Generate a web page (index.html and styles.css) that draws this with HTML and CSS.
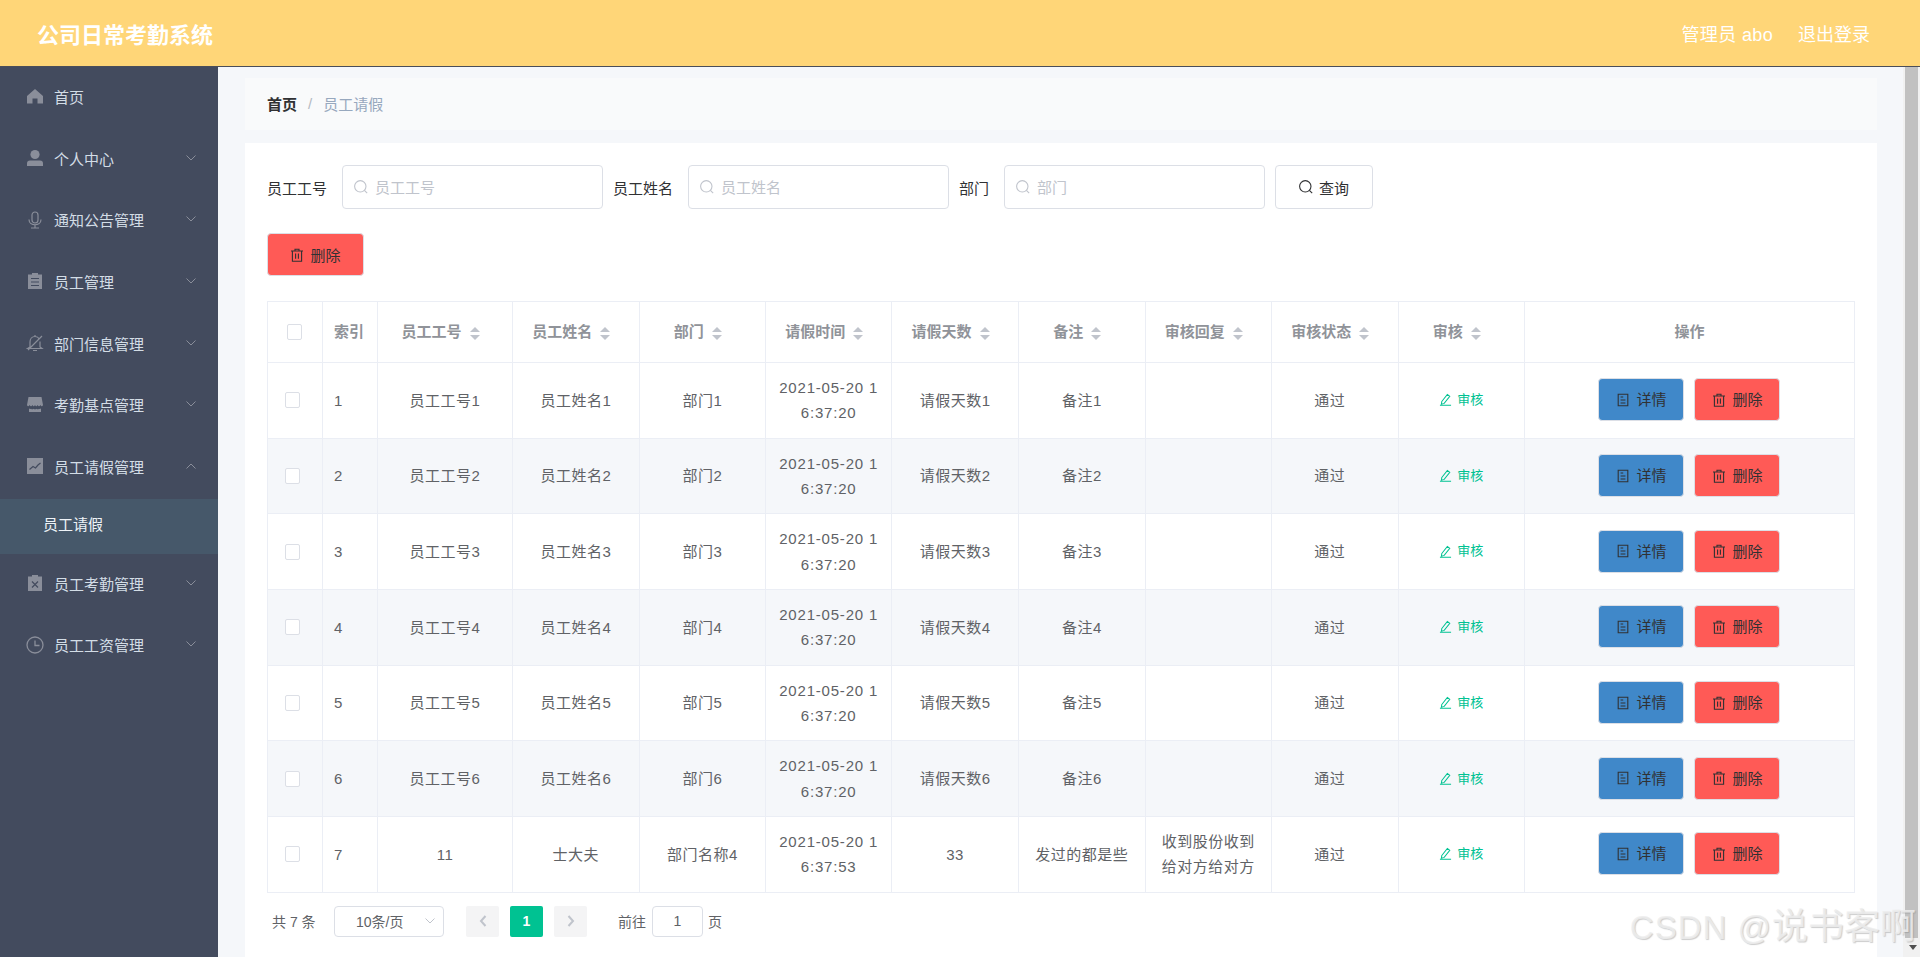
FILE: index.html
```html
<!DOCTYPE html>
<html lang="zh-CN">
<head>
<meta charset="utf-8">
<title>公司日常考勤系统</title>
<link rel="stylesheet" href="styles.css">
</head>
<body>
<svg class="sprite" width="0" height="0" aria-hidden="true">
  <symbol id="i-search" viewBox="0 0 14 14"><circle cx="6.300" cy="6.300" r="5.700" fill="none" stroke="currentColor" stroke-width="1.100"/><path d="M10.400 10.400l2.800 2.800" fill="none" stroke="currentColor" stroke-width="1.100"/></symbol>
  <symbol id="i-trash" viewBox="0 0 14 14"><path d="M1 3h12M5 3V1.200h4V3M2.400 3v10.200h9.200V3M5.600 5.400v5.400M8.400 5.400v5.400" fill="none" stroke="currentColor" stroke-width="1.100"/></symbol>
  <symbol id="i-doc" viewBox="0 0 14 14"><path d="M2.200 1.200h9.600v11.600H2.200zM4.600 4h2.600M4.600 7h4.800M4.600 10h4.800" fill="none" stroke="currentColor" stroke-width="1.100"/></symbol>
  <symbol id="i-edit" viewBox="0 0 14 14"><path d="M3 9.200L9 1.500l2.600 2-6 7.700-3 .8zM1 13.300h12" fill="none" stroke="currentColor" stroke-width="1.100"/></symbol>
  <symbol id="i-down" viewBox="0 0 10 6"><path d="M.5.5L5 5 9.500.5" fill="none" stroke="currentColor" stroke-width="1"/></symbol>
  <symbol id="i-up" viewBox="0 0 10 6"><path d="M.5 5.500L5 1l4.500 4.500" fill="none" stroke="currentColor" stroke-width="1"/></symbol>
</svg>

<header class="topbar">
  <div class="brand">公司日常考勤系统</div>
  <div class="userbox"><span class="who">管理员 abo</span><span>退出登录</span></div>
</header>

<div class="shell">
  <nav class="side">
    <a class="nav-item"><svg class="nav-icon" viewBox="0 0 18 18"><path d="M9 2L1 9v7.600h5.500v-5h5v5H17V9z" fill="currentColor"/></svg><span>首页</span></a>
    <a class="nav-item"><svg class="nav-icon" viewBox="0 0 18 18"><circle cx="9" cy="5.500" r="4.600" fill="currentColor"/><path d="M1 17v-2.500Q1 11.500 4 11.500h10q3 0 3 3V17z" fill="currentColor"/></svg><span>个人中心</span><svg class="chev"><use href="#i-down"/></svg></a>
    <a class="nav-item"><svg class="nav-icon" viewBox="0 0 18 18"><rect x="6" y="1" width="6" height="11" rx="3" fill="none" stroke="currentColor" stroke-width="1.200"/><path d="M3 8.500c0 7 12 7 12 0M9 14v3M5 17h8" fill="none" stroke="currentColor" stroke-width="1.200"/></svg><span>通知公告管理</span><svg class="chev"><use href="#i-down"/></svg></a>
    <a class="nav-item"><svg class="nav-icon" viewBox="0 0 18 18"><path d="M2 2.500h4V1h6v1.500h4V17H2z" fill="currentColor"/><path d="M5 6.500h8M5 10h8M5 13.500h8" stroke="#434b5e" stroke-width="1.200"/></svg><span>员工管理</span><svg class="chev"><use href="#i-down"/></svg></a>
    <a class="nav-item"><svg class="nav-icon" viewBox="0 0 18 18"><path d="M4 13V8c0-3 2-5.500 5-5.500 2 0 3.500 1 4.300 2.500M14 7.500V13l2 1.500H1.500L4 13M7 16.500h4M9 2.500V1M2 16L16 2" fill="none" stroke="currentColor" stroke-width="1.200"/></svg><span>部门信息管理</span><svg class="chev"><use href="#i-down"/></svg></a>
    <a class="nav-item"><svg class="nav-icon" viewBox="0 0 18 18"><path d="M2.500 1h13L17 9q-1 2.500-2.700 0-1.300 2.500-2.700 0-1.300 2.500-2.600 0-1.300 2.500-2.600 0-1.400 2.500-2.700 0Q2 11.500 1 9z" fill="currentColor"/><path d="M3 12.500q1 .8 2 .3 1.300 1 2.500 0 1.500 1 3 0 1.300 1 2.500 0 1 .5 2-.3V16H3z" fill="currentColor"/></svg><span>考勤基点管理</span><svg class="chev"><use href="#i-down"/></svg></a>
    <a class="nav-item"><svg class="nav-icon" viewBox="0 0 18 18"><rect x="1" y="1" width="16" height="16" fill="currentColor"/><path d="M3.500 12.500L7 9.500l2.500 1.500 2.500-3 2.500-2" fill="none" stroke="#434b5e" stroke-width="1.200"/></svg><span>员工请假管理</span><svg class="chev"><use href="#i-up"/></svg></a>
    <a class="nav-sub">员工请假</a>
    <a class="nav-item"><svg class="nav-icon" viewBox="0 0 18 18"><path d="M2 2.500h4V1h6v1.500h4V17H2z" fill="currentColor"/><path d="M6 7.500l6 6M12 7.500l-6 6" stroke="#434b5e" stroke-width="1.200"/></svg><span>员工考勤管理</span><svg class="chev"><use href="#i-down"/></svg></a>
    <a class="nav-item"><svg class="nav-icon" viewBox="0 0 18 18"><circle cx="9" cy="9" r="8" fill="none" stroke="currentColor" stroke-width="1.300"/><path d="M9 4.500V9.500h4.500" fill="none" stroke="currentColor" stroke-width="1.300"/></svg><span>员工工资管理</span><svg class="chev"><use href="#i-down"/></svg></a>
  </nav>

  <main class="main">
    <div class="crumbs"><b>首页</b><span class="crumb-sep">/</span><span class="crumb-cur">员工请假</span></div>
    <section class="card">
      <form class="filters">
        <label class="f-label">员工工号</label>
        <div class="f-input"><svg class="ic"><use href="#i-search"/></svg><input placeholder="员工工号"></div>
        <label class="f-label">员工姓名</label>
        <div class="f-input"><svg class="ic"><use href="#i-search"/></svg><input placeholder="员工姓名"></div>
        <label class="f-label">部门</label>
        <div class="f-input"><svg class="ic"><use href="#i-search"/></svg><input placeholder="部门"></div>
        <button type="button" class="btn btn-query"><svg class="ic"><use href="#i-search"/></svg>查询</button>
      </form>
      <div class="bulk"><button type="button" class="btn btn-red btn-bulk"><svg class="ic"><use href="#i-trash"/></svg>删除</button></div>

      <table class="grid">
        <colgroup><col class="w55"><col class="w55"><col class="w135"><col class="w127"><col class="w126"><col class="w126"><col class="w127"><col class="w127"><col class="w126"><col class="w127"><col class="w126"><col></colgroup>
        <thead>
          <tr>
            <th><span class="chk chk-head"></span></th>
            <th class="left">索引</th>
            <th class="sortable">员工工号<span class="sort"><i></i><i></i></span></th>
            <th class="sortable">员工姓名<span class="sort"><i></i><i></i></span></th>
            <th class="sortable">部门<span class="sort"><i></i><i></i></span></th>
            <th class="sortable">请假时间<span class="sort"><i></i><i></i></span></th>
            <th class="sortable">请假天数<span class="sort"><i></i><i></i></span></th>
            <th class="sortable">备注<span class="sort"><i></i><i></i></span></th>
            <th class="sortable">审核回复<span class="sort"><i></i><i></i></span></th>
            <th class="sortable">审核状态<span class="sort"><i></i><i></i></span></th>
            <th class="sortable">审核<span class="sort"><i></i><i></i></span></th>
            <th>操作</th>
          </tr>
        </thead>
        <tbody>
          <tr>
            <td><span class="chk"></span></td><td class="left">1</td><td>员工工号1</td><td>员工姓名1</td><td>部门1</td><td class="date">2021-05-20 16:37:20</td><td>请假天数1</td><td>备注1</td><td></td><td class="status">通过</td>
            <td><a class="audit"><svg class="ic"><use href="#i-edit"/></svg>审核</a></td>
            <td><div class="ops"><button type="button" class="btn btn-blue"><svg class="ic"><use href="#i-doc"/></svg>详情</button><button type="button" class="btn btn-red"><svg class="ic"><use href="#i-trash"/></svg>删除</button></div></td>
          </tr>
          <tr>
            <td><span class="chk"></span></td><td class="left">2</td><td>员工工号2</td><td>员工姓名2</td><td>部门2</td><td class="date">2021-05-20 16:37:20</td><td>请假天数2</td><td>备注2</td><td></td><td class="status">通过</td>
            <td><a class="audit"><svg class="ic"><use href="#i-edit"/></svg>审核</a></td>
            <td><div class="ops"><button type="button" class="btn btn-blue"><svg class="ic"><use href="#i-doc"/></svg>详情</button><button type="button" class="btn btn-red"><svg class="ic"><use href="#i-trash"/></svg>删除</button></div></td>
          </tr>
          <tr>
            <td><span class="chk"></span></td><td class="left">3</td><td>员工工号3</td><td>员工姓名3</td><td>部门3</td><td class="date">2021-05-20 16:37:20</td><td>请假天数3</td><td>备注3</td><td></td><td class="status">通过</td>
            <td><a class="audit"><svg class="ic"><use href="#i-edit"/></svg>审核</a></td>
            <td><div class="ops"><button type="button" class="btn btn-blue"><svg class="ic"><use href="#i-doc"/></svg>详情</button><button type="button" class="btn btn-red"><svg class="ic"><use href="#i-trash"/></svg>删除</button></div></td>
          </tr>
          <tr>
            <td><span class="chk"></span></td><td class="left">4</td><td>员工工号4</td><td>员工姓名4</td><td>部门4</td><td class="date">2021-05-20 16:37:20</td><td>请假天数4</td><td>备注4</td><td></td><td class="status">通过</td>
            <td><a class="audit"><svg class="ic"><use href="#i-edit"/></svg>审核</a></td>
            <td><div class="ops"><button type="button" class="btn btn-blue"><svg class="ic"><use href="#i-doc"/></svg>详情</button><button type="button" class="btn btn-red"><svg class="ic"><use href="#i-trash"/></svg>删除</button></div></td>
          </tr>
          <tr>
            <td><span class="chk"></span></td><td class="left">5</td><td>员工工号5</td><td>员工姓名5</td><td>部门5</td><td class="date">2021-05-20 16:37:20</td><td>请假天数5</td><td>备注5</td><td></td><td class="status">通过</td>
            <td><a class="audit"><svg class="ic"><use href="#i-edit"/></svg>审核</a></td>
            <td><div class="ops"><button type="button" class="btn btn-blue"><svg class="ic"><use href="#i-doc"/></svg>详情</button><button type="button" class="btn btn-red"><svg class="ic"><use href="#i-trash"/></svg>删除</button></div></td>
          </tr>
          <tr>
            <td><span class="chk"></span></td><td class="left">6</td><td>员工工号6</td><td>员工姓名6</td><td>部门6</td><td class="date">2021-05-20 16:37:20</td><td>请假天数6</td><td>备注6</td><td></td><td class="status">通过</td>
            <td><a class="audit"><svg class="ic"><use href="#i-edit"/></svg>审核</a></td>
            <td><div class="ops"><button type="button" class="btn btn-blue"><svg class="ic"><use href="#i-doc"/></svg>详情</button><button type="button" class="btn btn-red"><svg class="ic"><use href="#i-trash"/></svg>删除</button></div></td>
          </tr>
          <tr>
            <td><span class="chk"></span></td><td class="left">7</td><td>11</td><td>士大夫</td><td>部门名称4</td><td class="date">2021-05-20 16:37:53</td><td>33</td><td>发过的都是些</td><td>收到股份收到给对方给对方</td><td class="status">通过</td>
            <td><a class="audit"><svg class="ic"><use href="#i-edit"/></svg>审核</a></td>
            <td><div class="ops"><button type="button" class="btn btn-blue"><svg class="ic"><use href="#i-doc"/></svg>详情</button><button type="button" class="btn btn-red"><svg class="ic"><use href="#i-trash"/></svg>删除</button></div></td>
          </tr>
        </tbody>
      </table>

      <div class="pager">
        <span class="pg-total">共 7 条</span>
        <div class="pg-size"><span>10条/页</span><svg class="pg-chev"><use href="#i-down"/></svg></div>
        <div class="pg-nums">
          <span class="pg-btn"><svg class="pg-arrow" viewBox="0 0 10 14"><path d="M7.500 2L3 7l4.500 5" fill="none" stroke="currentColor" stroke-width="2"/></svg></span>
          <span class="pg-btn pg-on">1</span>
          <span class="pg-btn"><svg class="pg-arrow" viewBox="0 0 10 14"><path d="M2.500 2L7 7l-4.500 5" fill="none" stroke="currentColor" stroke-width="2"/></svg></span>
        </div>
        <span class="pg-goto">前往</span>
        <span class="pg-input">1</span>
        <span class="pg-unit">页</span>
      </div>
    </section>
  </main>

  <div class="scrollbar"><div class="thumb"></div><div class="scroll-end"><i></i></div></div>
</div>

<div class="watermark"><span class="wm-latin">CSDN @</span>说书客啊</div>
</body>
</html>
```

FILE: styles.css
```css
* { box-sizing: border-box; }
html, body { margin: 0; height: 957px; overflow: hidden; }
body {
  position: relative;
  display: flex;
  flex-direction: column;
  font-family: "Liberation Sans", "Noto Sans CJK SC", sans-serif;
  font-size: 15px;
  color: #606266;
  background: #f5f7fa;
}
.sprite { position: absolute; }

.topbar {
  flex: none;
  height: 67px;
  display: flex;
  align-items: center;
  justify-content: space-between;
  padding: 0 50px 0 37px;
  background: #ffd678;
  border-bottom: 1px solid #4a4e59;
  color: #fff;
}
.brand { font-size: 22px; font-weight: 700; }
.userbox { display: flex; gap: 25px; font-size: 18px; }
.who { letter-spacing: .35px; }

.shell { flex: 1; display: flex; min-height: 0; }

.side { flex: none; width: 218px; background: #434b5e; }
.nav-item {
  height: 61.7px;
  display: flex;
  align-items: center;
  padding: 0 22px 3px 26px;
  color: #d3dde6;
}
.nav-icon { flex: none; width: 18px; height: 18px; margin-right: 10px; color: #8a8e9a; }
.chev { flex: none; width: 10px; height: 6px; margin: -1px 0 0 auto; color: #8a8e9a; }
.nav-sub {
  display: flex;
  align-items: center;
  height: 55px;
  padding: 0 0 5px 43px;
  background: #46586a;
  color: #eef3f7;
}

.main { flex: 1; min-width: 0; padding: 11px 26px 0 27px; }
.crumbs {
  height: 52px;
  display: flex;
  align-items: center;
  padding: 0 22px 2px;
  background: #f9fafb;
  color: #303133;
}
.crumbs b { font-weight: 700; }
.crumb-sep { margin: 0 11px; color: #b4b9c2; }
.crumb-cur { color: #97a8be; }

.card {
  height: 814px;
  margin-top: 13px;
  padding: 22px 22px 0;
  background: #fff;
}

.filters { display: flex; align-items: center; height: 44px; }
.f-label { margin-right: 15px; color: #303133; white-space: nowrap; }
.f-input {
  width: 261px;
  height: 44px;
  display: flex;
  align-items: center;
  gap: 7px;
  margin-right: 10px;
  padding: 0 11px;
  border: 1px solid #dcdfe6;
  border-radius: 4px;
  color: #c0c4cc;
  background: #fff;
}
.f-input input {
  flex: 1;
  min-width: 0;
  border: 0;
  outline: 0;
  padding: 0;
  font: inherit;
  background: none;
}
.f-input input::placeholder { color: #c0c4cc; opacity: 1; }
.ic { flex: none; width: 14px; height: 14px; }

.btn {
  display: inline-flex;
  align-items: center;
  justify-content: center;
  gap: 6px;
  width: 86px;
  height: 43px;
  padding: 0;
  font: inherit;
  letter-spacing: 0;
  color: #303133;
  background: #fff;
  border: 1px solid #dcdfe6;
  border-radius: 4px;
}
.btn-query { width: 98px; height: 44px; }
.btn-red { background: #ff5a56; }
.btn-blue { background: #4088c9; }
.btn-bulk { width: 97px; }
.bulk { margin: 24px 0 25px; display: flex; }

.grid {
  width: 1588px;
  table-layout: fixed;
  border-collapse: collapse;
  background: #fff;
}
.w55 { width: 55px; }
.w126 { width: 126.3px; }
.w127 { width: 126.7px; }
.w135 { width: 135px; }
.grid th, .grid td {
  border: 1px solid #ebeef5;
  padding: 12px;
  text-align: center;
  vertical-align: middle;
  line-height: 25.35px;
}
.grid td { letter-spacing: .5px; }
.grid th {
  height: 61px;
  padding: 0;
  color: #909399;
  font-weight: 700;
}
.grid .left { text-align: left; padding-left: 11px; }
.grid .sortable { padding-right: 9px; }
.grid tbody tr:nth-child(even) td { background: #f5f7fa; }
.grid .date { word-break: break-all; letter-spacing: .8px; }
.grid .status { padding-right: 22px; }

.sort {
  display: inline-flex;
  flex-direction: column;
  gap: 3px;
  margin-left: 8px;
  vertical-align: middle;
}
.sort i {
  display: block;
  width: 0;
  height: 0;
  border-left: 5px solid transparent;
  border-right: 5px solid transparent;
}
.sort i:first-child { border-bottom: 5px solid #c0c4cc; }
.sort i:last-child { border-top: 5px solid #c0c4cc; }

.chk {
  display: block;
  width: 15px;
  height: 16px;
  margin: 0 auto 0 5px;
  background: #fff;
  border: 1px solid #dcdfe6;
  border-radius: 2px;
}
.chk-head { margin-left: 19px; }
.grid tbody td:first-child, .grid th:first-child { padding-left: 0; padding-right: 0; }
.grid tbody td:first-child .chk { margin-left: 17px; }

.audit {
  display: inline-flex;
  align-items: center;
  justify-content: center;
  gap: 5px;
  font-size: 13px;
  letter-spacing: 0;
  color: #00c292;
}
.audit .ic { width: 13px; height: 13px; }
.ops { display: flex; justify-content: center; gap: 10px; margin-top: -1px; }

.pager {
  display: flex;
  align-items: center;
  height: 31px;
  margin-top: 13px;
  padding-left: 5px;
  font-size: 14px;
}
.pg-total { width: 62px; }
.pg-size {
  width: 110px;
  height: 31px;
  display: flex;
  align-items: center;
  justify-content: space-between;
  padding: 0 8px 0 21px;
  border: 1px solid #dcdfe6;
  border-radius: 4px;
}
.pg-chev { width: 10px; height: 6px; color: #c0c4cc; }
.pg-nums { display: flex; gap: 11px; margin: 0 31px 0 22px; }
.pg-btn {
  width: 33px;
  height: 31px;
  display: flex;
  align-items: center;
  justify-content: center;
  background: #f4f4f5;
  border-radius: 2px;
  color: #c0c4cc;
}
.pg-arrow { width: 10px; height: 14px; }
.pg-on { background: #00c292; color: #fff; font-weight: 700; }
.pg-input {
  width: 51px;
  height: 31px;
  margin: 0 5px 0 6px;
  display: flex;
  align-items: center;
  justify-content: center;
  border: 1px solid #dcdfe6;
  border-radius: 4px;
}

.scrollbar {
  flex: none;
  width: 17px;
  display: flex;
  flex-direction: column;
  background: #f1f1f1;
}
.thumb { height: 871px; margin-left: 2px; width: 13px; background: #c1c1c1; }
.scroll-end { flex: 1; display: flex; align-items: center; justify-content: center; padding-left: 2px; }
.scroll-end i {
  width: 0;
  height: 0;
  border-left: 4.5px solid transparent;
  border-right: 4.5px solid transparent;
  border-top: 5px solid #505050;
}

.watermark {
  position: absolute;
  right: 4px;
  bottom: 7px;
  font-size: 36px;
  line-height: 44px;
  white-space: nowrap;
  color: rgba(238, 238, 238, .85);
  text-shadow: 1px 1px 1px rgba(130, 130, 130, .4);
}
.wm-latin { font-size: 33px; letter-spacing: 1px; }
```
